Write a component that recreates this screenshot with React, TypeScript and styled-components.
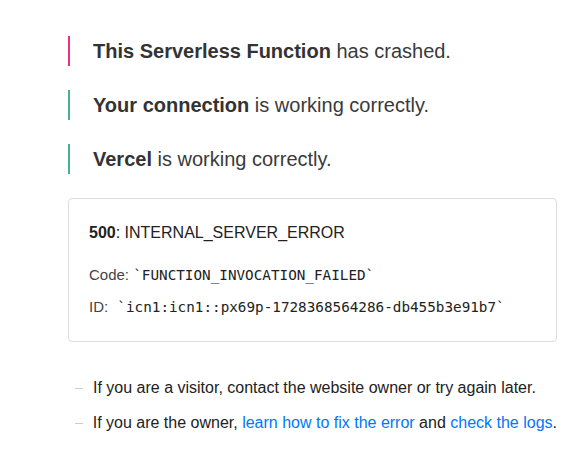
import React from "react";
import styled, { createGlobalStyle } from "styled-components";

const Global = createGlobalStyle`
  html, body { margin: 0; padding: 0; background: #fff; }
  body {
    font-family: "Liberation Sans", Arial, sans-serif;
    color: #333;
    -webkit-font-smoothing: antialiased;
  }
`;

const Main = styled.main`
  padding: 36px 28px 0 68px;
  display: flex;
  flex-direction: column;
`;

const Status = styled.p<{ $tone: "error" | "ok" }>`
  margin: 0 0 24px;
  padding-left: 23px;
  border-left: 2px solid ${(p) => (p.$tone === "error" ? "#f0307f" : "#43b493")};
  font-size: 20px;
  line-height: 30px;
  color: #3a3a3a;
  strong { font-weight: 700; color: #333; }
`;

const DevInfo = styled.div`
  border: 1px solid #ddd;
  border-radius: 4px;
  padding: 22px 20px 24px;
  display: flex;
  flex-direction: column;
`;

const ErrorTitle = styled.p`
  margin: 0 0 20px;
  font-size: 16px;
  line-height: 24px;
  color: #222;
  strong { font-weight: 700; }
`;

const InfoLine = styled.p<{ $last?: boolean }>`
  margin: 0 0 ${(p) => (p.$last ? 0 : 12)}px;
  font-size: 15px;
  line-height: 20px;
  color: #444;
`;

const Mono = styled.code<{ $shift?: number }>`
  font-family: "DejaVu Sans Mono", monospace;
  font-size: 14.3px;
  color: #222;
  margin-left: ${(p) => p.$shift ?? 0}px;
`;

const Notes = styled.ul`
  list-style: none;
  margin: 34px 0 0;
  padding: 0;
  display: flex;
  flex-direction: column;
  gap: 11px;
`;

const Note = styled.li`
  display: flex;
  align-items: center;
  font-size: 16px;
  line-height: 24px;
  color: #222;
  &::before {
    content: "";
    display: block;
    width: 8px;
    height: 1px;
    background: #ccc;
    margin: 0 10px 0 7px;
  }
  span { white-space: nowrap; }
`;

const Link = styled.a`
  color: #0076ff;
  text-decoration: none;
`;

export default function App() {
  return (
    <>
      <Global />
      <Main>
        <Status $tone="error">
          <strong>This Serverless Function</strong> has crashed.
        </Status>
        <Status $tone="ok">
          <strong>Your connection</strong> is working correctly.
        </Status>
        <Status $tone="ok">
          <strong>Vercel</strong> is working correctly.
        </Status>
        <DevInfo>
          <ErrorTitle>
            <strong>500</strong>: INTERNAL_SERVER_ERROR
          </ErrorTitle>
          <InfoLine>
            Code: <Mono>`FUNCTION_INVOCATION_FAILED`</Mono>
          </InfoLine>
          <InfoLine $last>
            ID: <Mono $shift={5}>`icn1:icn1::px69p-1728368564286-db455b3e91b7`</Mono>
          </InfoLine>
        </DevInfo>
        <Notes>
          <Note>
            <span>If you are a visitor, contact the website owner or try again later.</span>
          </Note>
          <Note>
            <span>
              If you are the owner, <Link href="#">learn how to fix the error</Link> and{" "}
              <Link href="#">check the logs</Link>.
            </span>
          </Note>
        </Notes>
      </Main>
    </>
  );
}
